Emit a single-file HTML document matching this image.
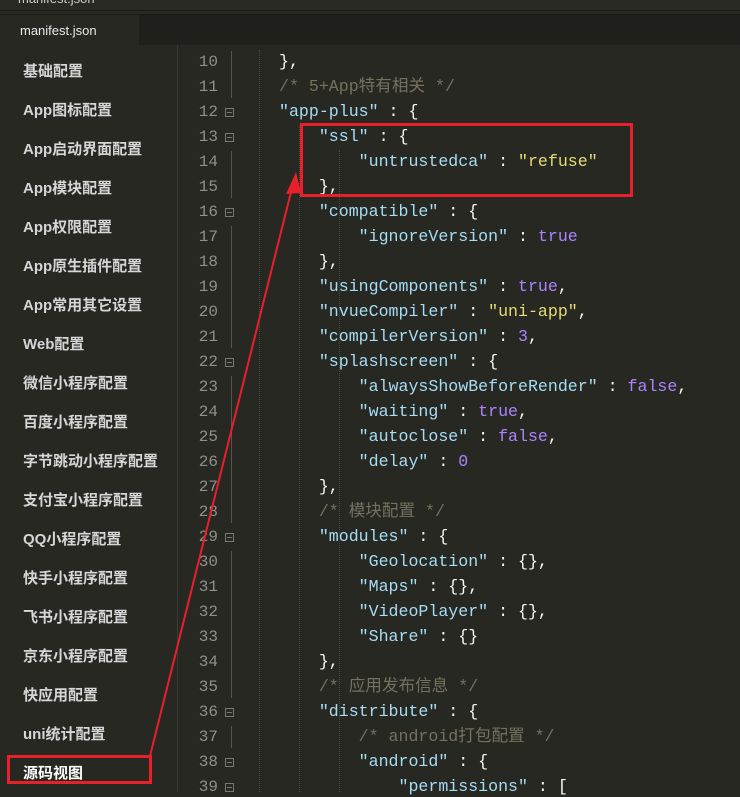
<!DOCTYPE html>
<html><head><meta charset="utf-8"><style>
*{margin:0;padding:0;box-sizing:border-box}
body{width:740px;height:792px;overflow:hidden;background:#272822;position:relative;font-family:"Liberation Sans","Noto Sans CJK SC",sans-serif}
.top{position:absolute;left:0;top:0;width:740px;height:15px;background:#282923;border-bottom:1px solid #1a1a18}
.top:after{content:"";position:absolute;left:0;right:0;top:10px;height:1px;background:#1a1a18}
.top span{position:absolute;left:18px;top:-9px;color:#ccc;font-size:13px}
.tabs{position:absolute;left:0;top:15px;width:740px;height:30px;background:#1f1f1c}
.tab{position:absolute;left:0;top:0;width:139px;height:30px;background:#272822;color:#e8e8e8;font-size:13px;padding:8px 0 0 20px}
.side{position:absolute;left:0;top:45px;width:178px;height:747px;border-right:1px solid #3a3a36}
.side div{position:absolute;left:23px;font-size:15px;font-weight:bold;color:#d6d6d6;white-space:nowrap}
.num{position:absolute;left:178px;width:40px;text-align:right;font-family:"Liberation Mono",monospace;font-size:16px;line-height:20px;color:#8f908a}
.fold{position:absolute;left:225px;width:9px;height:9px;border:1px solid #777}
.fold:after{content:"";position:absolute;left:1px;top:3px;width:5px;height:1px;background:#777}
.code{position:absolute;left:279px;font-family:"Liberation Mono","Noto Sans CJK SC",monospace;font-size:16.6px;line-height:20px;height:20px;color:#f8f8f2;white-space:pre}
.k{color:#a6dcf4}.s{color:#e6db74}.b{color:#ae81ff}.c{color:#75715e}
.vl{position:absolute;left:231px;width:1px;background:#555}
.g{position:absolute;border-left:1px dotted #4a4a44}
</style></head><body>
<div class="top"><span>manifest.json</span></div>
<div class="tabs"><div class="tab">manifest.json</div></div>
<div class="side">
<div style="top:15px">基础配置</div>
<div style="top:54px">App图标配置</div>
<div style="top:93px">App启动界面配置</div>
<div style="top:132px">App模块配置</div>
<div style="top:171px">App权限配置</div>
<div style="top:210px">App原生插件配置</div>
<div style="top:249px">App常用其它设置</div>
<div style="top:288px">Web配置</div>
<div style="top:327px">微信小程序配置</div>
<div style="top:366px">百度小程序配置</div>
<div style="top:405px">字节跳动小程序配置</div>
<div style="top:444px">支付宝小程序配置</div>
<div style="top:483px">QQ小程序配置</div>
<div style="top:522px">快手小程序配置</div>
<div style="top:561px">飞书小程序配置</div>
<div style="top:600px">京东小程序配置</div>
<div style="top:639px">快应用配置</div>
<div style="top:678px">uni统计配置</div>
<div style="top:717px;color:#fff">源码视图</div>
</div>
<div class="g" style="left:259px;top:50px;height:742px"></div>
<div class="g" style="left:299px;top:125px;height:667px"></div>
<div class="g" style="left:339px;top:150px;height:642px"></div>
<div id="L"></div>
<script>
var lines=[
'},',
'<span class="c">/* 5+App特有相关 */</span>',
'<span class="k">"app-plus"</span> : {',
'    <span class="k">"ssl"</span> : {',
'        <span class="k">"untrustedca"</span> : <span class="s">"refuse"</span>',
'    },',
'    <span class="k">"compatible"</span> : {',
'        <span class="k">"ignoreVersion"</span> : <span class="b">true</span>',
'    },',
'    <span class="k">"usingComponents"</span> : <span class="b">true</span>,',
'    <span class="k">"nvueCompiler"</span> : <span class="s">"uni-app"</span>,',
'    <span class="k">"compilerVersion"</span> : <span class="b">3</span>,',
'    <span class="k">"splashscreen"</span> : {',
'        <span class="k">"alwaysShowBeforeRender"</span> : <span class="b">false</span>,',
'        <span class="k">"waiting"</span> : <span class="b">true</span>,',
'        <span class="k">"autoclose"</span> : <span class="b">false</span>,',
'        <span class="k">"delay"</span> : <span class="b">0</span>',
'    },',
'    <span class="c">/* 模块配置 */</span>',
'    <span class="k">"modules"</span> : {',
'        <span class="k">"Geolocation"</span> : {},',
'        <span class="k">"Maps"</span> : {},',
'        <span class="k">"VideoPlayer"</span> : {},',
'        <span class="k">"Share"</span> : {}',
'    },',
'    <span class="c">/* 应用发布信息 */</span>',
'    <span class="k">"distribute"</span> : {',
'        <span class="c">/* android打包配置 */</span>',
'        <span class="k">"android"</span> : {',
'            <span class="k">"permissions"</span> : ['];
var folds=[12,13,16,22,29,36,38,39];
var h='';
for(var i=0;i<lines.length;i++){var n=10+i,y=50+i*25;
h+='<div class="num" style="top:'+(y+2)+'px">'+n+'</div>';
if(folds.indexOf(n)>=0)h+='<div class="fold" style="top:'+(y+8)+'px"></div>';
else h+='<div class="vl" style="top:'+(y+1)+'px;height:'+(folds.indexOf(n+1)>=0?22:25)+'px"></div>';
h+='<div class="code" style="top:'+(y+2)+'px">'+lines[i]+'</div>';}
document.getElementById('L').innerHTML=h;
</script>
<div style="position:absolute;left:300px;top:123px;width:333px;height:74px;border:3px solid #e8202a"></div>
<div style="position:absolute;left:7px;top:755px;width:145px;height:29px;border:3px solid #e8202a"></div>
<svg style="position:absolute;left:0;top:0" width="740" height="792">
<line x1="150" y1="756" x2="294" y2="180" stroke="#e8202a" stroke-width="2"/>
<polygon points="296,172 286,194 301,193" fill="#e8202a"/>
</svg>
</body></html>
